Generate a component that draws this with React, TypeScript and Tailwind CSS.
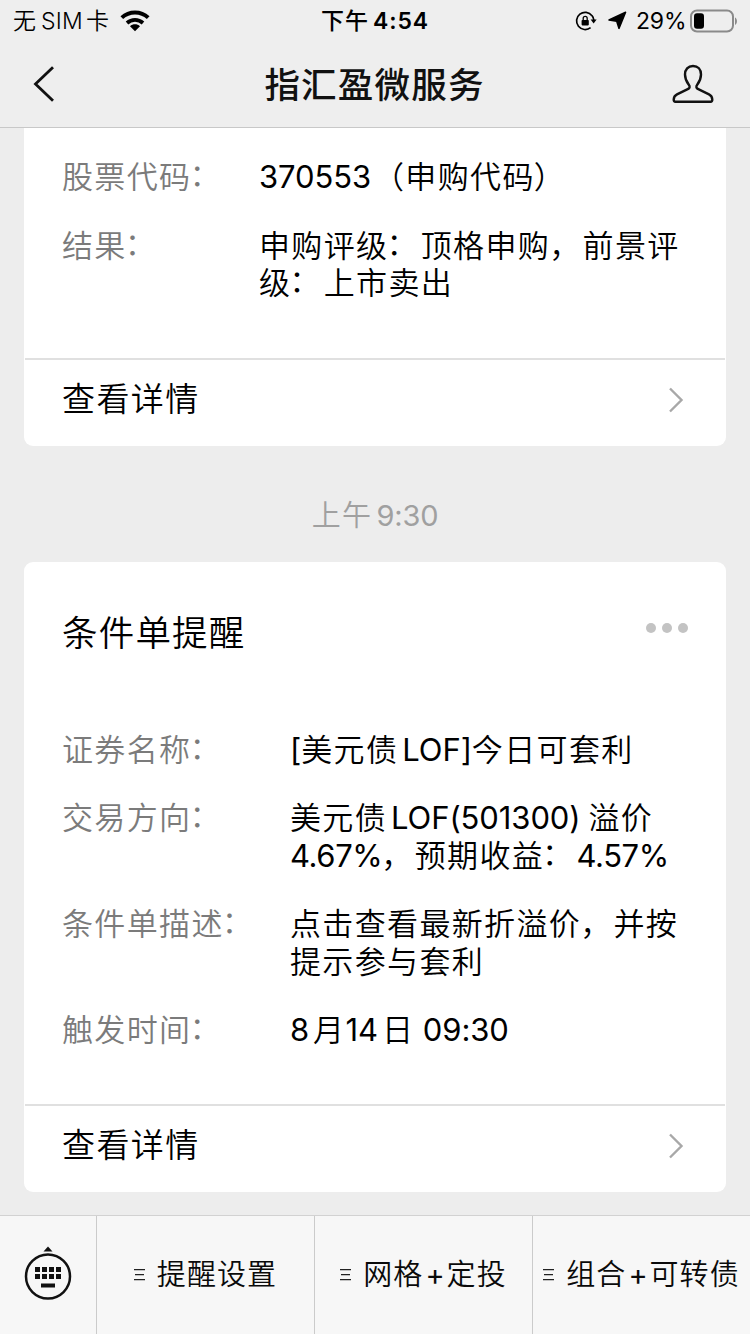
import React from "react";

const isLatin = (s: string) => /^[\x20-\x7e]/.test(s);
const isIdeograph = (s: string) => /^[\u4e00-\u9fff]$/.test(s);

function leadingGap(prev: string, run: string, tight: boolean) {
  if (!isIdeograph(prev)) return "";
  if (tight) return "ml-[2px]";
  return /^[A-Z]/.test(run) ? "ml-[4px]" : "";
}

function trailingGap(next: string, run: string, tight: boolean) {
  if (next === "（") return "mr-[2px]";
  if (!isIdeograph(next)) return "";
  if (tight) return "mr-[2px]";
  if (run.endsWith(")")) return "mr-[8px]";
  return /\w$/.test(run) ? "mr-[4px]" : "";
}

/** Mixed-script text: tracked Chinese runs, Latin runs with spacing around them, shifted punctuation. */
function Mixed({ children, tight = false }: { children: string; tight?: boolean }) {
  const runs = children.match(/[\x20-\x7e]+|[：，]|）|[^\x20-\x7e：，）]+/g) ?? [];
  return (
    <>
      {runs.map((r, i) => {
        if (r === "：") return <span key={i} className="-ml-[2px] mr-[2px] align-[2px] leading-none">{r}</span>;
        if (r === "，") return <span key={i} className="-ml-[1px] mr-[1px]">{r}</span>;
        if (r === "）") return <span key={i} className="-ml-[1px]">{r}</span>;
        if (!isLatin(r)) return <React.Fragment key={i}>{r}</React.Fragment>;
        const prev = i > 0 ? runs[i - 1].slice(-1) : "";
        const next = i < runs.length - 1 ? runs[i + 1][0] : "";
        const track = r.includes("%") ? "tracking-[-0.4px]" : "tracking-[-0.1px]";
        return (
          <span key={i} className={`whitespace-pre font-normal ${track} ${leadingGap(prev, r, tight)} ${trailingGap(next, r, tight)}`}>
            {r}
          </span>
        );
      })}
    </>
  );
}

function Row({ label, lines, wide = false }: { label: string; lines: string[]; wide?: boolean }) {
  return (
    <div className="flex text-[31px] leading-[37.5px] tracking-[1.35px]">
      <div className={(wide ? "w-[228px]" : "w-[197px]") + " shrink-0 whitespace-nowrap font-[350] text-[#7b7b7b]"}>
        <Mixed>{label}</Mixed>
      </div>
      <div className="font-[350] text-black">
        {lines.map((l) => (
          <div key={l} className="h-[37.5px] whitespace-nowrap">
            <Mixed>{l}</Mixed>
          </div>
        ))}
      </div>
    </div>
  );
}

function DetailLink() {
  return (
    <div className="mx-px flex h-[88px] items-center justify-between border-t-2 border-[#e0e0e0] pl-[37px] pr-[41px] pb-[8px]">
      <span className="text-[33px] leading-[40px] font-[350] tracking-[1.4px] text-black">查看详情</span>
      <svg className="mt-[2px] h-[26px] w-[16px]" viewBox="0 0 16 26" fill="none" stroke="#a8a8a8" strokeWidth="2.4">
        <path d="M2 1.5 13.5 13 2 24.5" />
      </svg>
    </div>
  );
}

function StatusBar() {
  return (
    <div className="flex h-10 items-center pt-px text-[23px] leading-[30px] text-black">
      <div className="flex w-[321px] items-center pl-[13px] font-[350]">
        <span className="w-[24px]">无</span>
        <span className="ml-[4px] w-[45px] tracking-[0.2px]">SIM</span>
        <span className="w-[24px]">卡</span>
        <svg className="ml-[10px] h-[22px] w-[30px]" viewBox="0 0 30 22" fill="none" stroke="#000">
          <path d="M1.8 7.6C9.2.8 20.8.8 28.2 7.6" strokeWidth="4" />
          <path d="M7 13C11.6 8.9 18.4 8.9 23 13" strokeWidth="3.8" />
          <path d="M10 16.3C12.9 13.7 17.1 13.7 20 16.3L15 21.2Z" fill="#000" stroke="none" />
        </svg>
      </div>
      <div className="flex w-[254px]">
        <span className="w-[52px] font-medium tracking-[1px]">下午</span>
        <span className="font-[560] tracking-[0.9px]">4:54</span>
      </div>
      <svg className="h-[20px] w-[22px]" viewBox="0 0 22 20" fill="none" stroke="#000" strokeWidth="1.7">
        <path d="M17 4.7A8.6 8.6 0 1 0 15.6 16.6" />
        <path d="M17 4.5A8.6 8.6 0 0 1 18.8 9" />
        <path d="M15.6 8.5H21.6L18.6 12.6Z" fill="#000" stroke="none" />
        <rect x="6.6" y="9" width="7.2" height="5.4" rx=".8" fill="#000" stroke="none" />
        <path d="M8.2 9V7.4a2 2 0 0 1 4 0V9" strokeWidth="1.3" />
      </svg>
      <svg className="ml-[11px] h-[19px] w-[19px]" viewBox="0 0 19 19">
        <path d="M17.600 1.200 11 17.400 8.700 10.300 1 9Z" fill="#000" stroke="#000" strokeLinejoin="round" strokeWidth="1.500" />
      </svg>
      <span className="ml-[9px] w-[53px] whitespace-nowrap tracking-[-0.2px]">29%</span>
      <svg className="h-[24px] w-[50px]" viewBox="0 0 50 24">
        <rect x="2" y="1.500" width="42" height="21" rx="6" fill="none" stroke="#8a8a8a" strokeWidth="2" />
        <rect x="5" y="4.200" width="10" height="15.600" rx="3" fill="#000" />
        <path d="M46 8.500c2.600 1 2.600 6.400 0 7.400Z" fill="#8a8a8a" />
      </svg>
    </div>
  );
}

function NavBar() {
  return (
    <div className="flex h-[88px] items-center justify-between border-b border-[#c8c8c8] pl-[33px] pr-[36px]">
      <svg className="h-[36px] w-[42px]" viewBox="0 0 42 36" fill="none" stroke="#111" strokeWidth="2.8">
        <path d="M20 1.200 2.500 18 20 34.800" />
      </svg>
      <h1 className="pt-[4px] pl-[2px] text-[35.5px] leading-[44px] font-medium tracking-[1.2px] text-[#111]">指汇盈微服务</h1>
      <svg className="h-[40px] w-[42px]" viewBox="0 0 42 40" fill="none" stroke="#111" strokeWidth="2.4" strokeLinejoin="round">
        <path d="M21 2C26 2 29 5.600 29 10.500C29 15 27.200 18.200 25.200 20.800C23.800 22.700 24.200 24.200 26.300 25.200L37 30.400C39.600 31.700 40.300 33.500 40.300 35.800C40.300 37.200 39.900 37.700 38.600 37.700H3.400C2.100 37.700 1.700 37.200 1.700 35.800C1.700 33.500 2.400 31.700 5 30.400L15.700 25.200C17.800 24.200 18.200 22.700 16.800 20.800C14.800 18.200 13 15 13 10.500C13 5.600 16 2 21 2Z" />
      </svg>
    </div>
  );
}

function MenuItem({ label }: { label: string }) {
  return (
    <div className="flex flex-1 items-center justify-center gap-[12px] border-l border-[#cbcbcb]">
      <svg className="h-[12px] w-[11px]" viewBox="0 0 11 12" stroke="#222" strokeWidth="1.200">
        <path d="M0 .6H11M1 5.600H10M0 10.600H11" />
      </svg>
      <span className="whitespace-nowrap text-[29px] leading-[36px] font-[350] tracking-[1.100px] text-[#0a0a0a]">
        <Mixed tight>{label}</Mixed>
      </span>
    </div>
  );
}

export default function App() {
  return (
    <div className="flex h-[1334px] w-[750px] flex-col overflow-hidden bg-[#ededed] font-['Inter','Noto_Sans_CJK_SC',sans-serif]">
      <header className="bg-[#eeeeee]">
        <StatusBar />
        <NavBar />
      </header>

      <main className="flex flex-1 flex-col px-[24px]">
        <section className="flex h-[318px] flex-col rounded-b-[9px] bg-white">
          <div className="flex flex-1 flex-col gap-[31px] pl-[38px] pt-[30px]">
            <Row label="股票代码：" lines={["370553（申购代码）"]} />
            <Row label="结果：" lines={["申购评级：顶格申购，前景评", "级：上市卖出"]} />
          </div>
          <DetailLink />
        </section>

        <div className="flex h-[116px] items-center justify-center pt-[23px] text-[29px] tracking-[1.400px] text-[#a0a0a0]">
          <span className="font-[350]">上午</span>
          <span className="ml-[4px] tracking-[-0.2px]">9:30</span>
        </div>

        <section className="flex h-[630px] flex-col rounded-[9px] bg-white">
          <div className="flex items-start justify-between pl-[38px] pr-[37px] pt-[50px]">
            <h2 className="text-[35.5px] leading-[44px] font-[350] tracking-[1.2px] text-black">条件单提醒</h2>
            <svg className="mt-[10px] h-[12px] w-[44px]" viewBox="0 0 44 12" fill="#c3c3c3">
              <circle cx="6" cy="6" r="5" />
              <circle cx="22" cy="6" r="5" />
              <circle cx="38" cy="6" r="5" />
            </svg>
          </div>
          <div className="flex flex-1 flex-col gap-[31px] pl-[38px] pt-[74.5px]">
            <Row wide label="证券名称：" lines={["[美元债LOF]今日可套利"]} />
            <Row wide label="交易方向：" lines={["美元债LOF(501300)溢价", "4.67%，预期收益：4.57%"]} />
            <Row wide label="条件单描述：" lines={["点击查看最新折溢价，并按", "提示参与套利"]} />
            <Row wide label="触发时间：" lines={["8月14日 09:30"]} />
          </div>
          <DetailLink />
        </section>
      </main>

      <footer className="flex h-[119px] border-t border-[#d2d2d2] bg-[#f7f7f7]">
        <div className="flex w-[96px] items-center justify-center pb-[5px]">
          <svg className="h-[56px] w-[50px]" viewBox="0 0 50 56" fill="#111">
            <path d="M20.500 6.500 25 1.500 29.500 6.500Z" />
            <circle cx="25" cy="31.500" r="22" fill="none" stroke="#111" strokeWidth="2.500" />
            <path d="M12 22h5v5h-5zM19 22h5v5h-5zM26 22h5v5h-5zM33 22h5v5h-5zM12 29h5v5h-5zM19 29h5v5h-5zM26 29h5v5h-5zM33 29h5v5h-5zM18 38.500h14v4h-14z" />
          </svg>
        </div>
        <MenuItem label="提醒设置" />
        <MenuItem label="网格+定投" />
        <MenuItem label="组合+可转债" />
      </footer>
    </div>
  );
}
